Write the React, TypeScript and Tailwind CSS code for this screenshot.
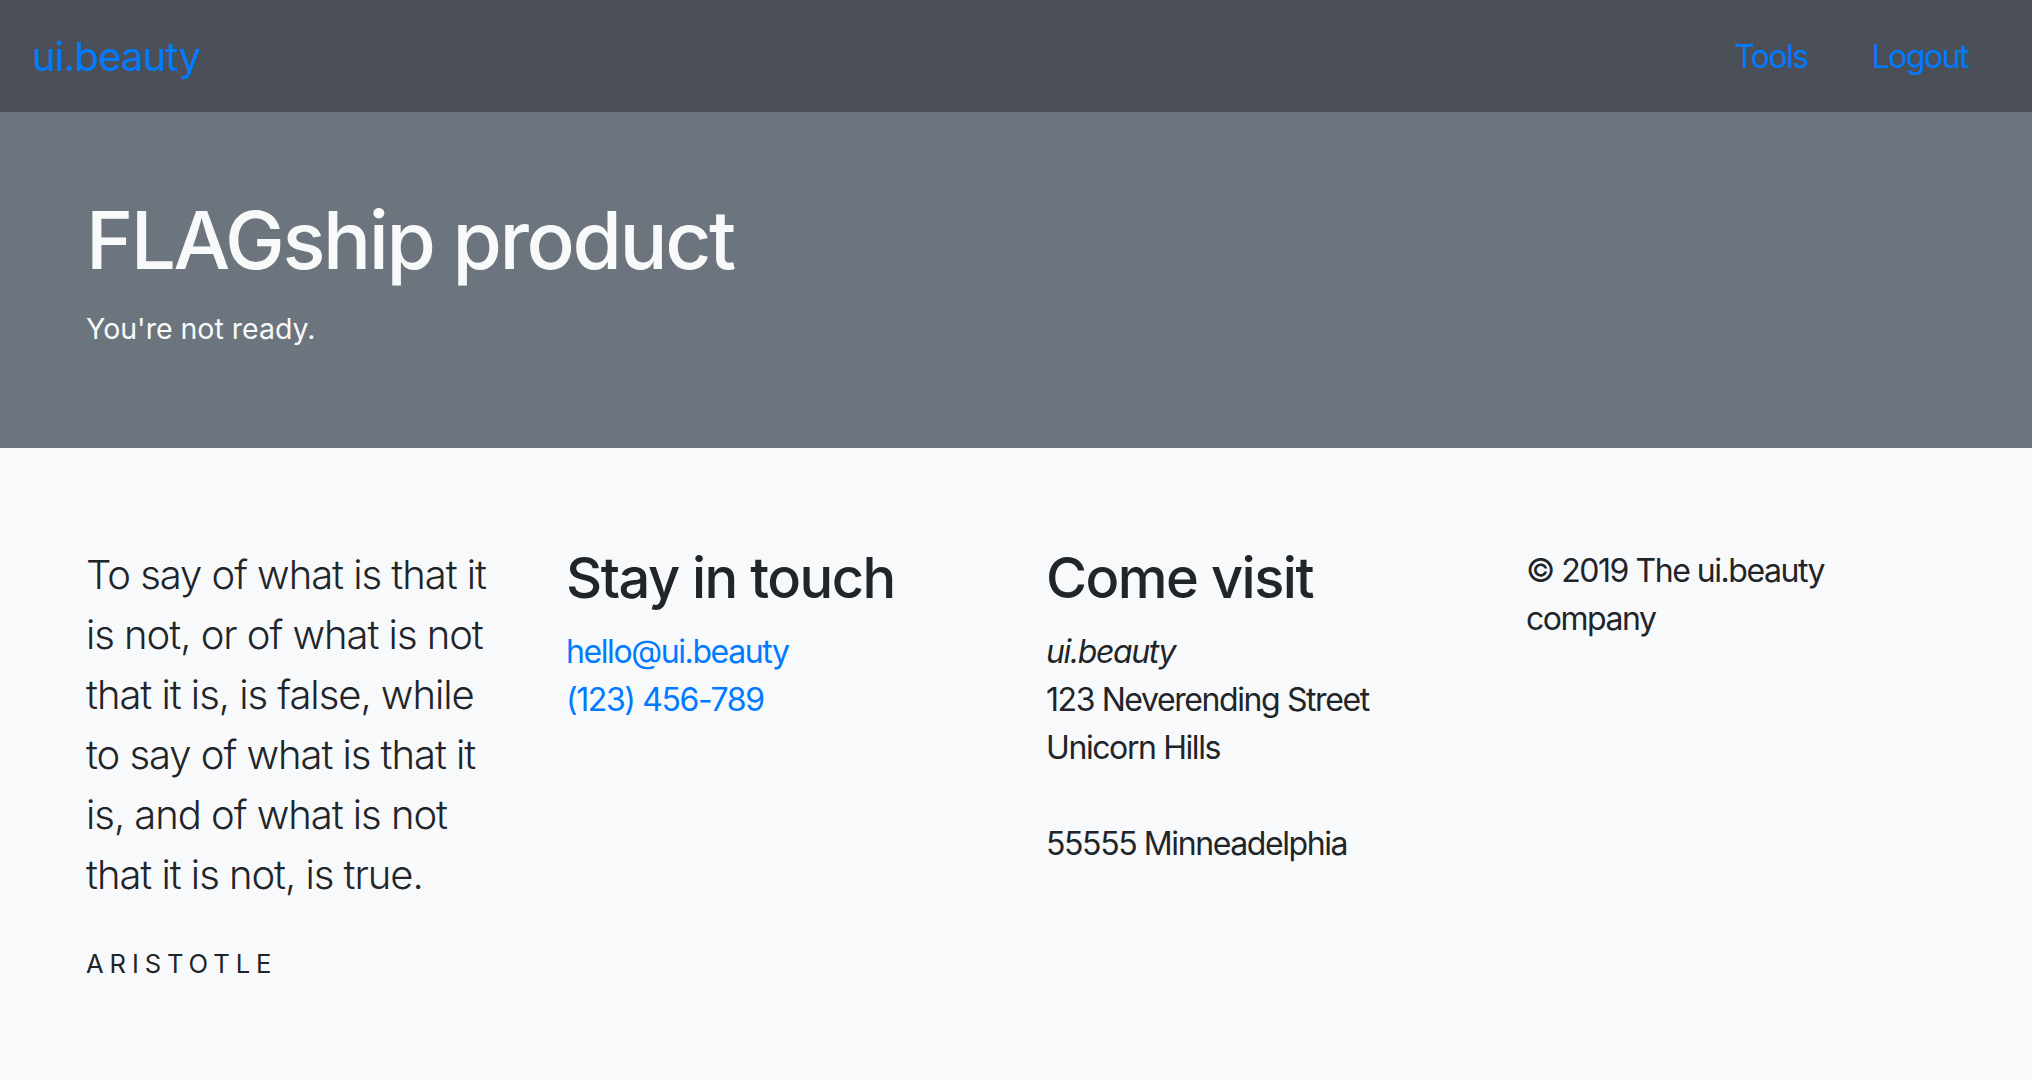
// App.tsx — ui.beauty landing: navbar, hero band, four-column info row.

const FONT = { fontFamily: 'Inter, "Noto Sans", sans-serif' }

export default function App() {
    return (
        <div className="min-h-screen bg-[#f8f9fa] text-[#212529]" style={FONT}>
            {/* Navbar */}
            <nav className="flex h-[112px] items-center justify-between bg-[#4b5058] px-8 pt-[2px]">
                <a href="#" className="text-[40px] leading-[60px] tracking-[-0.02em] text-[#007bff]">
                    ui.beauty
                </a>
                <div className="flex">
                    <a href="#" className="px-8 text-[32px] leading-[48px] tracking-[-0.048em] text-[#007bff]">
                        Tools
                    </a>
                    <a href="#" className="px-8 text-[32px] leading-[48px] tracking-[-0.048em] text-[#007bff]">
                        Logout
                    </a>
                </div>
            </nav>

            {/* Hero */}
            <header className="h-[336px] bg-[#6c757d] pt-[80px]">
                <div className="mx-auto w-[1920px] px-[30px] text-[#f8f9fa]">
                    <h1 className="text-[80px] font-medium leading-[96px] tracking-[-0.03em]">
                        FLAGship product
                    </h1>
                    <p className="mt-[20px] text-[28.5px] leading-[42px]">
                        You're not ready.
                    </p>
                </div>
            </header>

            {/* Info row */}
            <main className="mx-auto grid w-[1920px] grid-cols-4 pt-[97px] pb-16">
                <div className="px-[30px]">
                    <p className="text-[40px] font-light leading-[60px] tracking-[-0.026em]">
                        To say of what is that it is not, or of what is not
                        that it is, is false, while to say of what is that it
                        is, and of what is not that it is not, is true.
                    </p>
                    <div className="mt-[40px] text-[25.6px] uppercase leading-[38px] tracking-[0.23em]">
                        Aristotle
                    </div>
                </div>

                <div className="px-[30px]">
                    <h3 className="mb-4 text-[56px] font-medium leading-[67px] tracking-[-0.027em]">
                        Stay in touch
                    </h3>
                    <div className="flex flex-col text-[32px] leading-[48px] tracking-[-0.044em]">
                        <a href="#" className="text-[#007bff]">
                            hello@ui.beauty
                        </a>
                        <a href="#" className="text-[#007bff]">
                            (123) 456-789
                        </a>
                    </div>
                </div>

                <div className="px-[30px]">
                    <h3 className="mb-4 text-[56px] font-medium leading-[67px] tracking-[-0.027em]">
                        Come visit
                    </h3>
                    <address className="text-[32px] not-italic leading-[48px] tracking-[-0.044em]">
                        <em>ui.beauty</em>
                        <br />
                        123 Neverending Street
                        <br />
                        Unicorn Hills
                        <br />
                        <br />
                        55555 Minneadelphia
                    </address>
                </div>

                <div className="px-[30px] pt-[2px]">
                    <p className="text-[32px] leading-[48px] tracking-[-0.046em]">
                        © 2019 The ui.beauty company
                    </p>
                </div>
            </main>
        </div>
    )
}
